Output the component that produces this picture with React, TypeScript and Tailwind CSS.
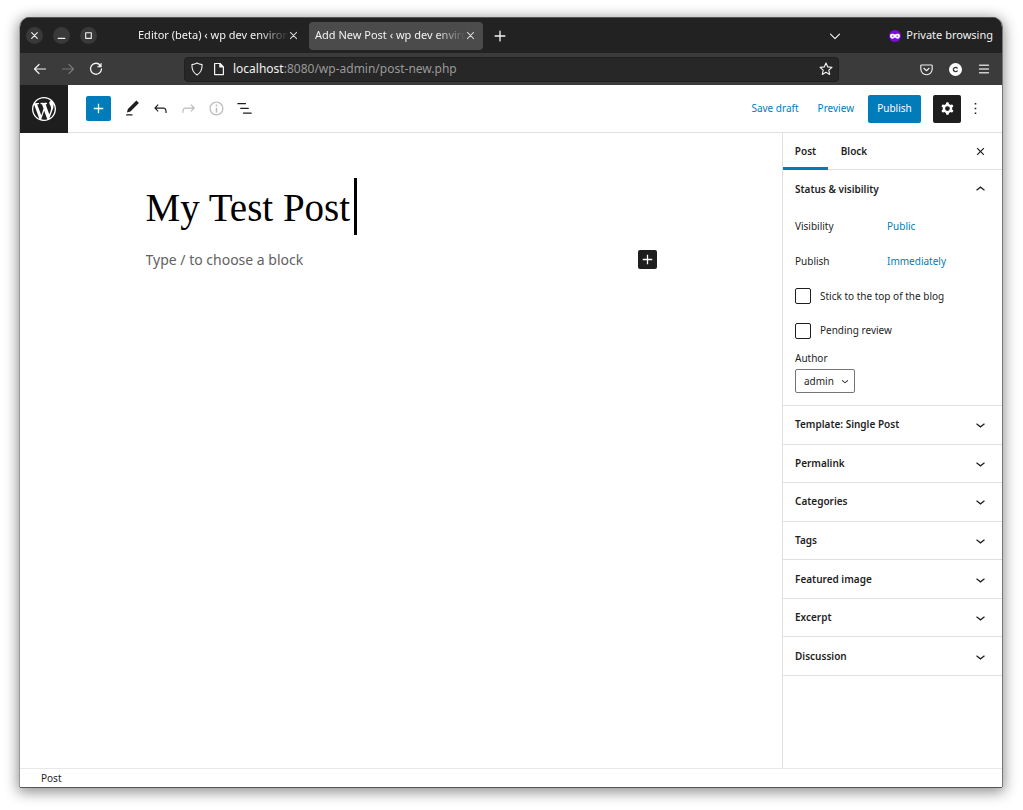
import type { ReactNode } from "react";

function Icon({ d, className = "size-[19px]" }: { d: string; className?: string }) {
  return (
    <svg viewBox="0 0 24 24" className={className} fill="currentColor" fillRule="evenodd" aria-hidden="true">
      <path d={d} />
    </svg>
  );
}

function Line({ children, className = "size-4", width = 1.2 }: { children: ReactNode; className?: string; width?: number }) {
  return (
    <svg
      viewBox="0 0 16 16"
      className={className}
      fill="none"
      stroke="currentColor"
      strokeWidth={width}
      strokeLinecap="round"
      strokeLinejoin="round"
      aria-hidden="true"
    >
      {children}
    </svg>
  );
}

const paths = {
  plus: "M18 11.2h-5.2V6h-1.6v5.2H6v1.6h5.2V18h1.6v-5.2H18z",
  edit: "M20.1 5.1L16.9 2 6.2 12.7l-1.3 4.4 4.5-1.3L20.1 5.1zM4 20.8h8v-1.5H4v1.5z",
  undo: "M18.3 11.7c-.6-.6-1.4-.9-2.3-.9H6.7l2.9-3.3-1.1-1-4.5 5L8.5 16l1-1-2.7-2.7H16c.5 0 .9.2 1.3.5 1 1 1 3.4 1 4.5v.3h1.5v-.2c0-1.5 0-4.3-1.5-5.7z",
  redo: "M15.6 6.5l-1.1 1 2.9 3.3H8c-.9 0-1.7.3-2.3.9-1.4 1.5-1.4 4.2-1.4 5.6v.2h1.5v-.3c0-1.1 0-3.5 1-4.5.3-.3.7-.5 1.3-.5h9.2L14.5 15l1.1 1.1 4.6-4.6-4.6-5z",
  info: "M12 3.2c-4.8 0-8.8 3.9-8.8 8.8 0 4.8 3.9 8.8 8.8 8.8 4.8 0 8.8-3.9 8.8-8.8 0-4.8-4-8.8-8.8-8.8zm0 16c-4 0-7.2-3.3-7.2-7.2C4.8 8 8 4.8 12 4.8s7.2 3.3 7.2 7.2c0 4-3.2 7.2-7.2 7.2zM11 17h2v-6h-2v6zm0-8h2V7h-2v2z",
  list: "M13.8 5.2H3v1.5h10.8V5.2zm-3.6 12v1.5H21v-1.5H10.2zm7.2-6H6.6v1.5h10.8v-1.5z",
  down: "M17.5 11.6L12 16l-5.5-4.4.9-1.2L12 14l4.5-3.6 1 1.2z",
  up: "M6.5 12.4L12 8l5.5 4.4-.9 1.2L12 10l-4.5 3.6-1-1.2z",
  close: "M12 13.06l3.712 3.713 1.061-1.06L13.061 12l3.712-3.712-1.06-1.06L12 10.938 8.288 7.227l-1.061 1.06L10.939 12l-3.712 3.712 1.06 1.061L12 13.061z",
  more: "M13 19h-2v-2h2v2zm0-6h-2v-2h2v2zm0-6h-2V5h2v2z",
  cog: "M10.289 4.836A1 1 0 0111.275 4h1.306a1 1 0 01.987.836l.244 1.466c.787.26 1.503.679 2.108 1.218l1.393-.522a1 1 0 011.216.437l.653 1.13a1 1 0 01-.23 1.273l-1.148.944a6.025 6.025 0 010 2.435l1.149.946a1 1 0 01.23 1.272l-.653 1.13a1 1 0 01-1.216.437l-1.394-.522c-.605.54-1.32.958-2.108 1.218l-.244 1.466a1 1 0 01-.987.836h-1.306a1 1 0 01-.986-.836l-.244-1.466a5.995 5.995 0 01-2.108-1.218l-1.394.522a1 1 0 01-1.217-.436l-.653-1.131a1 1 0 01.23-1.272l1.149-.946a6.026 6.026 0 010-2.435l-1.148-.944a1 1 0 01-.23-1.272l.653-1.131a1 1 0 011.217-.437l1.393.522a5.994 5.994 0 012.108-1.218l.244-1.466zM14.929 12a3 3 0 11-6 0 3 3 0 016 0z",
  wordpress:
    "M20 10c0-5.51-4.49-10-10-10C4.48 0 0 4.49 0 10c0 5.52 4.48 10 10 10 5.51 0 10-4.48 10-10zM7.78 15.37L4.37 6.22c.55-.02 1.17-.08 1.17-.08.5-.06.44-1.13-.06-1.11 0 0-1.45.11-2.37.11-.18 0-.37 0-.58-.01C4.12 2.69 6.87 1.11 10 1.11c2.33 0 4.45.87 6.05 2.34-.68-.11-1.65.39-1.65 1.58 0 .74.45 1.36.9 2.1.35.61.55 1.36.55 2.46 0 1.49-1.4 5-1.4 5l-3.03-8.37c.54-.02.82-.17.82-.17.5-.05.44-1.25-.06-1.22 0 0-1.44.12-2.38.12-.87 0-2.33-.12-2.33-.12-.5-.03-.56 1.2-.06 1.22l.92.08 1.26 3.41zM17.41 10c.24-.64.74-1.87.43-4.25.7 1.29 1.05 2.71 1.05 4.25 0 3.29-1.73 6.24-4.4 7.78.97-2.59 1.94-5.2 2.92-7.78zM6.1 18.09C3.12 16.65 1.11 13.53 1.11 10c0-1.3.23-2.48.72-3.59C3.25 10.3 4.67 14.2 6.1 18.09zm4.03-6.63l2.58 6.98c-.86.29-1.76.45-2.71.45-.79 0-1.57-.11-2.29-.33.81-2.38 1.62-4.74 2.42-7.1z",
};

const panels = ["Template: Single Post", "Permalink", "Categories", "Tags", "Featured image", "Excerpt", "Discussion"];

function WindowButton({ label, children }: { label: string; children: ReactNode }) {
  return (
    <button aria-label={label} className="flex size-[17px] items-center justify-center rounded-full bg-[#393939] text-[#f0f0f0]">
      <Line className="size-[9px]" width={2}>{children}</Line>
    </button>
  );
}

function BrowserTab({ title, active = false }: { title: string; active?: boolean }) {
  return (
    <div className={active ? "flex h-7 w-[174px] items-center rounded bg-[#4b4b4b] pr-2 pl-[6px]" : "flex h-7 w-[174px] items-center rounded pr-2 pl-[6px]"}>
      <button role="tab" aria-selected={active} className="min-w-0 flex-1 overflow-hidden text-left whitespace-nowrap [mask-image:linear-gradient(to_right,black_80%,transparent)]">
        {title}
      </button>
      <button aria-label={`Close ${title}`} className="text-[#d8d8d8]">
        <Line className="size-[9px]" width={1.8}>
          <path d="M2.500 2.500l11 11M13.500 2.500l-11 11" />
        </Line>
      </button>
    </div>
  );
}

function ToolButton({ label, d, muted = false }: { label: string; d: string; muted?: boolean }) {
  return (
    <button aria-label={label} disabled={muted} className={muted ? "flex size-7 items-center justify-center text-[#bbbbbb]" : "flex size-7 items-center justify-center"}>
      <Icon d={d} />
    </button>
  );
}

function BrowserChrome() {
  return (
    <div className="text-[11px] text-[#f2f2f2]">
      <div className="flex h-9 items-center border-t border-[#555555] bg-[#222222] pr-[9px] pl-[6px]">
        <div className="flex gap-[10px]">
          <WindowButton label="Close window"><path d="M3 3l10 10M13 3L3 13" /></WindowButton>
          <WindowButton label="Minimize window"><path d="M2 13h12" /></WindowButton>
          <WindowButton label="Maximize window"><path d="M3 3h10v10H3z" /></WindowButton>
        </div>
        <div role="tablist" className="ml-[35px] flex gap-[3px]">
          <BrowserTab title="Editor (beta) ‹ wp dev environment" />
          <BrowserTab active title="Add New Post ‹ wp dev environment" />
        </div>
        <button aria-label="New tab" className="ml-[11px]">
          <Line className="size-3" width={1.8}><path d="M8 1.500v13M1.500 8h13" /></Line>
        </button>
        <button aria-label="List all tabs" className="mr-12 ml-auto">
          <Line className="size-3" width={1.6}><path d="M2 5.500l6 6 6-6" /></Line>
        </button>
        <svg viewBox="0 0 16 16" className="mr-[5px] size-3" aria-hidden="true">
          <circle cx="8" cy="8" r="8" fill="#7d0ae0" />
          <path d="M1.500 6.500C2.300 5 6 4.600 8 6c2-1.400 5.700-1 6.500.5.500 2.800-.9 5-3.300 5C9.700 11.500 9 10 8 10s-1.700 1.500-3.200 1.500c-2.400 0-3.800-2.200-3.300-5z" fill="#fff" />
          <path d="M3.500 8c.8-1 2.200-1 3 0-.8 1.200-2.200 1.200-3 0zM9.500 8c.8-1 2.200-1 3 0-.8 1.200-2.200 1.200-3 0z" fill="#7d0ae0" />
        </svg>
        <span>Private browsing</span>
      </div>

      <div className="flex h-8 items-center bg-[#3b3b3b] pr-3 pl-3">
        <div className="flex w-[152px] items-center gap-3">
          <button aria-label="Back"><Line><path d="M2.500 8h11M7 3.500L2.500 8 7 12.500" /></Line></button>
          <button aria-label="Forward" disabled className="text-[#777777]"><Line><path d="M2.500 8h11M9 3.500L13.500 8 9 12.500" /></Line></button>
          <button aria-label="Reload">
            <Line width={1.3}>
              <path d="M12.300 4.300A5.500 5.500 0 1 0 13.500 8" />
              <path d="M13.300 2.500V6H9.800z" fill="currentColor" strokeWidth="0.600" />
            </Line>
          </button>
        </div>
        <div className="flex h-[25px] min-w-0 flex-1 items-center rounded border border-[#202020] bg-[#272727] px-[5px]">
          <Line className="size-[14px] shrink-0" width={1.3}><path d="M8 1.200c1.900 1.200 3.500 1.600 5.800 1.800C14 8.600 12 12.500 8 14.800 4 12.500 2 8.600 2.200 3 4.500 2.800 6.100 2.400 8 1.200z" /></Line>
          <Line className="mr-[7px] ml-2 size-[14px] shrink-0" width={1.4}>
            <path d="M3 1.700h6.200L13 5.500v8.800H3z" />
            <path d="M9 2v3.700h3.700z" fill="currentColor" />
          </Line>
          <a href="#address" className="flex-1 text-xs"><span>localhost</span><span className="text-[#999999]">:8080/wp-admin/post-new.php</span></a>
          <button aria-label="Bookmark this page">
            <Line className="size-[14px]" width={1.3}><path d="M8 1.200l2 4.400 4.800.5-3.600 3.200 1 4.900L8 11.800l-4.200 2.400 1-4.900L1.200 6.100l4.800-.5z" /></Line>
          </button>
        </div>
        <div className="ml-[81px] flex items-center gap-4">
          <button aria-label="Save to Pocket">
            <Line className="size-[13px]" width={1.4}>
              <path d="M2 2.500h12c.7 0 1 .4 1 1v4c0 4-3 7-7 7s-7-3-7-7v-4c0-.6.300-1 1-1z" />
              <path d="M4.800 6.500L8 9.500l3.200-3" />
            </Line>
          </button>
          <button aria-label="Account" className="flex size-[13px] items-center justify-center rounded-full bg-white">
            <Line className="size-[7px] text-[#333333]" width={3}><path d="M12 4.800a5 5 0 1 0 0 6.400" /></Line>
          </button>
          <button aria-label="Open application menu">
            <Line className="size-3 text-[#cfcfcf]" width={1.8}><path d="M2 3h12M2 8h12M2 13h12" /></Line>
          </button>
        </div>
      </div>
    </div>
  );
}

function EditorHeader() {
  return (
    <header className="flex h-12 items-center border-b border-[#e0e0e0]">
      <a href="#dashboard" aria-label="View posts" className="flex h-12 w-12 items-center justify-center bg-[#1e1e1e] text-white">
        <svg viewBox="0 0 20 20" className="size-6" fill="currentColor" aria-hidden="true"><path d={paths.wordpress} /></svg>
      </a>
      <button aria-label="Toggle block inserter" className="mr-[7px] ml-[18px] flex size-[25px] items-center justify-center rounded-xs bg-[#007cba] text-white">
        <Icon d={paths.plus} />
      </button>
      <div className="flex">
        <ToolButton label="Tools" d={paths.edit} />
        <ToolButton label="Undo" d={paths.undo} />
        <ToolButton label="Redo" d={paths.redo} muted />
        <ToolButton label="Details" d={paths.info} muted />
        <ToolButton label="List view" d={paths.list} />
      </div>
      <div className="ml-auto flex items-center text-[10px] text-[#007cba]">
        <button className="mr-[19px]">Save draft</button>
        <button className="mr-[14px]">Preview</button>
        <button className="h-7 w-[53px] rounded-xs bg-[#007cba] text-white">Publish</button>
        <button aria-label="Settings" aria-pressed="true" className="ml-3 flex size-7 items-center justify-center rounded-xs bg-[#1e1e1e] text-white"><Icon d={paths.cog} /></button>
        <button aria-label="Options" className="mr-[17px] ml-[5px] text-[#1e1e1e]"><Icon d={paths.more} /></button>
      </div>
    </header>
  );
}

function Sidebar() {
  return (
    <aside className="w-[220px] shrink-0 border-l border-[#e0e0e0] text-[10px]">
      <div className="flex h-[37px] items-stretch border-b border-[#e0e0e0] font-semibold">
        <div role="tablist" className="-mb-px flex">
          <button role="tab" aria-selected="true" className="w-[45px] border-b-3 border-[#007cba] pt-[3px]">Post</button>
          <button role="tab" aria-selected="false" className="w-[52px]">Block</button>
        </div>
        <button aria-label="Close settings" className="mr-3 ml-auto"><Icon d={paths.close} /></button>
      </div>

      <section className="h-[236px] border-b border-[#e0e0e0] px-3">
        <h2>
          <button aria-expanded="true" className="flex h-[39px] w-full items-center justify-between font-semibold">
            Status &amp; visibility
            <Icon d={paths.up} />
          </button>
        </h2>
        <div className="flex h-[35px] items-center"><span className="w-[92px]">Visibility</span><button className="text-[#007cba]">Public</button></div>
        <div className="flex h-[35px] items-center"><span className="w-[92px]">Publish</span><button className="text-[#007cba]">Immediately</button></div>
        <label className="flex h-[34px] items-center gap-[9px]">
          <input type="checkbox" className="size-4 appearance-none rounded-xs border border-[#1e1e1e]" />
          Stick to the top of the blog
        </label>
        <label className="flex h-[35px] items-center gap-[9px]">
          <input type="checkbox" className="size-4 appearance-none rounded-xs border border-[#1e1e1e]" />
          Pending review
        </label>
        <label htmlFor="author" className="block h-[21px] leading-5">Author</label>
        <div className="grid w-[60px] items-center">
          <select id="author" defaultValue="admin" className="col-start-1 row-start-1 h-6 appearance-none rounded-xs border border-[#757575] bg-white pl-2">
            <option>admin</option>
          </select>
          <span className="pointer-events-none col-start-1 row-start-1 mr-[3px] justify-self-end"><Icon d={paths.down} className="size-[14px]" /></span>
        </div>
      </section>

      <div className="grid h-[270px] auto-rows-fr">
        {panels.map((name) => (
          <h2 key={name} className="border-b border-[#e0e0e0]">
            <button aria-expanded="false" className="flex h-full w-full items-center justify-between px-3 font-semibold">
              {name}
              <Icon d={paths.down} />
            </button>
          </h2>
        ))}
      </div>
    </aside>
  );
}

export default function App() {
  return (
    <div className="flex min-h-screen flex-col bg-white pt-[17px] pr-[21px] pb-[23px] pl-5 font-['Noto_Sans','Open_Sans',sans-serif] text-[#1e1e1e]">
      <div className="flex flex-1 flex-col overflow-hidden rounded-t-[10px] bg-white shadow-[1px_0_0_0_#777777,-1px_0_0_0_#999999,0_1px_0_0_#555555,0_3px_14px_2px_rgba(0,0,0,0.45)]">
        <BrowserChrome />
        <EditorHeader />
        <div className="flex flex-1">
          <main className="min-w-0 flex-1">
            <div className="mx-auto w-full max-w-[511px] pt-[45px]">
              <div className="flex items-center">
                <input aria-label="Post title" defaultValue="My Test Post" className="h-14 w-[208px] pt-[3px] font-['Liberation_Serif',serif] text-[39px] text-black outline-none" />
                <span className="h-[57px] w-[3px] bg-black" />
              </div>
              <div className="mt-[14px] flex items-center justify-between">
                <input aria-label="Paragraph block" placeholder="Type / to choose a block" className="h-5 w-[300px] text-[14px] outline-none placeholder:text-[#626262]" />
                <button aria-label="Add block" className="flex size-[19px] items-center justify-center rounded-xs bg-[#1e1e1e] text-white"><Icon d={paths.plus} /></button>
              </div>
            </div>
          </main>
          <Sidebar />
        </div>
        <footer className="flex h-[19px] items-center border-t border-[#e8e8e8] pl-[21px] text-[10px]">Post</footer>
      </div>
    </div>
  );
}
